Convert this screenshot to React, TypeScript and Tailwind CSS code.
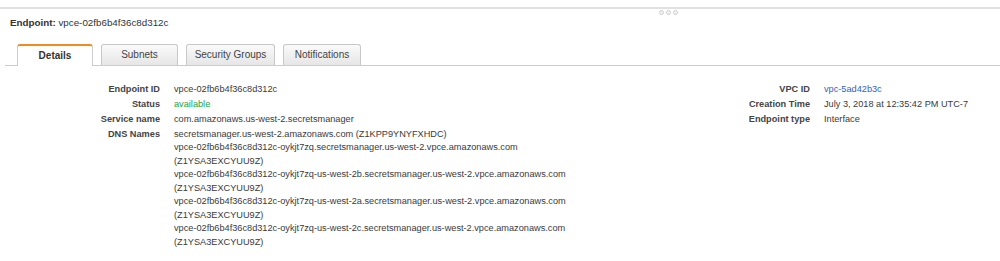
import React from 'react';

const dnsNames = [
  'secretsmanager.us-west-2.amazonaws.com (Z1KPP9YNYFXHDC)',
  'vpce-02fb6b4f36c8d312c-oykjt7zq.secretsmanager.us-west-2.vpce.amazonaws.com',
  '(Z1YSA3EXCYUU9Z)',
  'vpce-02fb6b4f36c8d312c-oykjt7zq-us-west-2b.secretsmanager.us-west-2.vpce.amazonaws.com',
  '(Z1YSA3EXCYUU9Z)',
  'vpce-02fb6b4f36c8d312c-oykjt7zq-us-west-2a.secretsmanager.us-west-2.vpce.amazonaws.com',
  '(Z1YSA3EXCYUU9Z)',
  'vpce-02fb6b4f36c8d312c-oykjt7zq-us-west-2c.secretsmanager.us-west-2.vpce.amazonaws.com',
  '(Z1YSA3EXCYUU9Z)',
];

const tabs = [
  { name: 'Details', width: 'w-[76px]', active: true },
  { name: 'Subnets', width: 'w-[77px]', active: false },
  { name: 'Security Groups', width: 'w-[89px]', active: false },
  { name: 'Notifications', width: 'w-[78px]', active: false },
];

function Row({ label, children, labelWidth }: { label: string; children: React.ReactNode; labelWidth: string }) {
  return (
    <div className="flex py-[0.75px]">
      <div className={`${labelWidth} shrink-0 text-right font-bold text-[#444]`}>{label}</div>
      <div className="pl-[14px]">{children}</div>
    </div>
  );
}

export default function App() {
  return (
    <div className="w-[1000px] h-[261px] overflow-hidden bg-white font-['Liberation_Sans',Arial,sans-serif] text-[9.2px] leading-[13.5px] text-[#3a3a3a]">
      <div className="pt-[7px]">
        <div className="relative h-[2px] bg-[#e0e0e0]">
          <div className="absolute left-[659px] top-[3px] flex gap-[2px]">
            {[0, 1, 2].map((i) => (
              <span
                key={i}
                className="block w-[5px] h-[5px] rounded-full border border-[#cfcfcf] bg-[#f2f2f2]"
              />
            ))}
          </div>
        </div>
      </div>

      <div className="pl-[10px] mt-[7px] text-[9.8px] leading-[14px] text-[#333]">
        <span className="font-bold">Endpoint:</span> vpce-02fb6b4f36c8d312c
      </div>

      <div className="mt-[14px] ml-[5px] flex gap-[8px] pl-[12px] border-b border-[#cccccc] text-[10px]">
        {tabs.map((t) =>
          t.active ? (
            <div
              key={t.name}
              className={`${t.width} h-[22px] -mb-px flex items-center justify-center rounded-t-[3px] border border-b-0 border-[#cccccc] border-t-2 border-t-[#f08c1e] bg-white font-bold text-[#333]`}
            >
              {t.name}
            </div>
          ) : (
            <div
              key={t.name}
              className={`${t.width} h-[21px] flex items-center justify-center rounded-t-[3px] border border-b-0 border-[#c8c8c8] bg-gradient-to-b from-[#fafafa] to-[#e6e6e6] text-[#444]`}
            >
              {t.name}
            </div>
          )
        )}
      </div>

      <div className="flex pt-[16px]">
        <div className="w-[700px] shrink-0">
          <Row label="Endpoint ID" labelWidth="w-[160px]">vpce-02fb6b4f36c8d312c</Row>
          <Row label="Status" labelWidth="w-[160px]">
            <span className="text-[#23a043]">available</span>
          </Row>
          <Row label="Service name" labelWidth="w-[160px]">com.amazonaws.us-west-2.secretsmanager</Row>
          <Row label="DNS Names" labelWidth="w-[160px]">
            {dnsNames.map((d, i) => (
              <div key={i}>{d}</div>
            ))}
          </Row>
        </div>
        <div className="flex-1">
          <Row label="VPC ID" labelWidth="w-[110px]">
            <span className="text-[#2f64c0]">vpc-5ad42b3c</span>
          </Row>
          <Row label="Creation Time" labelWidth="w-[110px]">July 3, 2018 at 12:35:42 PM UTC-7</Row>
          <Row label="Endpoint type" labelWidth="w-[110px]">Interface</Row>
        </div>
      </div>
    </div>
  );
}
